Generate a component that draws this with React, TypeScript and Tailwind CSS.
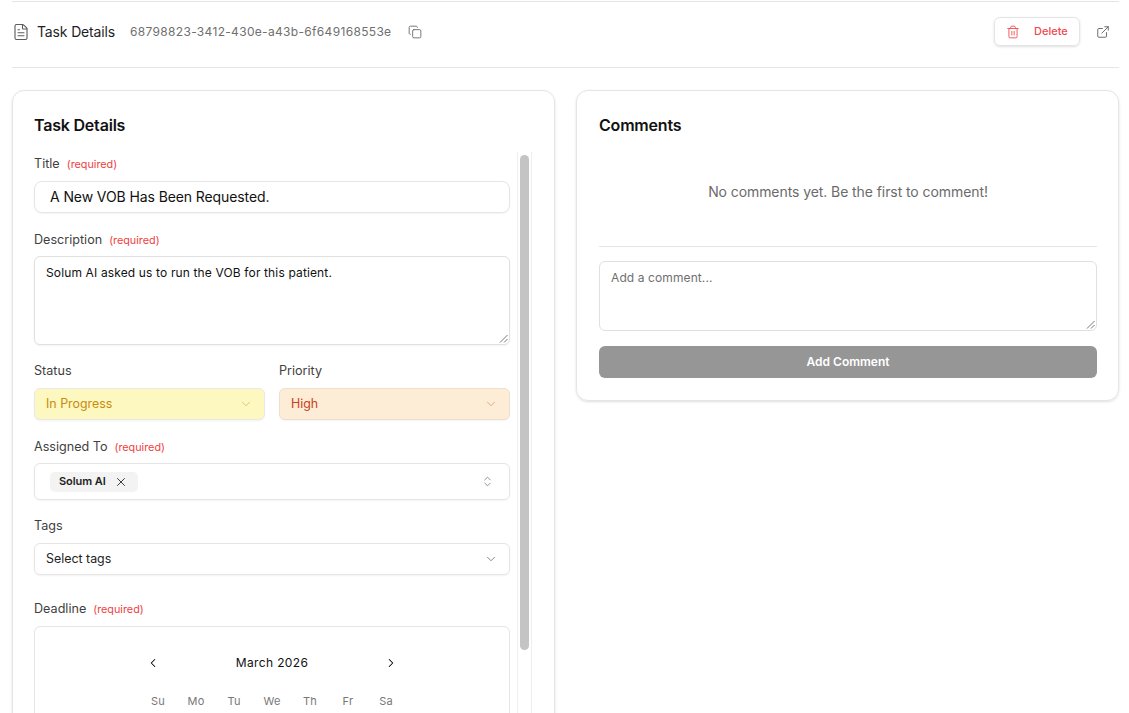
import { ChevronDown, ChevronLeft, ChevronRight, ChevronsUpDown, Copy, ExternalLink, FileText, Trash2, X } from 'lucide-react'

const WEEKDAYS = ['Su', 'Mo', 'Tu', 'We', 'Th', 'Fr', 'Sa']

function Required() {
  return <span className="text-[10.8px] leading-none text-[#f03e3e] ml-[7px] pt-[2px]">(required)</span>
}

function Label({ text, required }: { text: string; required?: boolean }) {
  return (
    <div className="flex items-center h-[18px] text-[12.6px] font-normal text-[#3f3f3f]">
      {text}
      {required && <Required />}
    </div>
  )
}

function Resizer() {
  return (
    <svg className="absolute right-[1px] bottom-[1px]" width="9" height="9" viewBox="0 0 9 9" fill="none" stroke="#555" strokeWidth="0.8">
      <path d="M8.5 1 1 8.5M8.5 5 5 8.5" />
    </svg>
  )
}

export default function App() {
  return (
    <div className="h-[713px] w-[1129px] overflow-hidden bg-white pl-3 pr-[10px] pt-[1px] font-['Inter',sans-serif] text-black">
      {/* Header */}
      <div className="flex h-[67px] items-center justify-between border-y border-[#e5e5e5] pb-[6px]">
        <div className="flex items-center">
          <FileText size={18} strokeWidth={1.5} className="text-[#5c5c5c]" />
          <span className="ml-[7px] text-sm tracking-[-0.15px] text-[#1f1f1f]">Task Details</span>
          <span className="ml-[15px] text-xs tracking-[0.32px] text-[#6f6f6f]">68798823-3412-430e-a43b-6f649168553e</span>
          <Copy size={14} strokeWidth={1.5} className="ml-[17px] text-[#666]" />
        </div>
        <div className="flex items-center pr-[9px]">
          <button className="flex h-[29px] w-[86px] items-center rounded-md border border-[#e5e5e5] pl-[11px] text-[11px] font-medium text-[#f0484e] shadow-sm">
            <Trash2 size={14} strokeWidth={1.5} />
            <span className="ml-[14px]">Delete</span>
          </button>
          <ExternalLink size={14} strokeWidth={1.5} className="ml-[16px] text-[#5c5c5c]" />
        </div>
      </div>

      {/* Cards */}
      <div className="mt-[22px] flex gap-[21px]">
        <div className="h-[700px] w-[543px] shrink-0 rounded-xl border border-[#e5e5e5] pl-[21px] pt-[25px] shadow-sm">
          <h2 className="h-[18px] text-base leading-[18px] font-semibold tracking-[-0.2px] text-[#111]">Task Details</h2>
          <div className="mt-[18px] flex">
            <div className="w-[476px] shrink-0 pt-[3px]">
              <Label text="Title" required />
              <div className="mt-[8px] flex h-[32px] items-center rounded-lg border border-[#e5e5e5] pl-[15px] text-sm tracking-[-0.1px] text-[#111] shadow-xs">
                A New VOB Has Been Requested.
              </div>

              <div className="mt-[18px]">
                <Label text="Description" required />
              </div>
              <div className="relative mt-[7px] h-[89px] rounded-md border border-[#e0e0e0] px-[11px] pt-[8px] text-xs leading-[15px] tracking-[0.14px] text-[#111] shadow-xs">
                Solum AI asked us to run the VOB for this patient.
                <Resizer />
              </div>

              <div className="mt-[17px] grid grid-cols-2 gap-[14px]">
                <div>
                  <Label text="Status" />
                  <div className="mt-[8px] flex h-[32px] items-center justify-between rounded-md border border-[#e9e9e9] bg-[#fcf8bf] pl-[11px] pr-[11px] text-[12.4px] text-[#c98a10] shadow-xs">
                    In Progress
                    <ChevronDown size={14} strokeWidth={1.5} className="text-[#e3b768]" />
                  </div>
                </div>
                <div>
                  <Label text="Priority" />
                  <div className="mt-[8px] flex h-[32px] items-center justify-between rounded-md border border-[#eee0cf] bg-[#fdecd6] pl-[11px] pr-[11px] text-[12.4px] text-[#c9401b] shadow-xs">
                    High
                    <ChevronDown size={14} strokeWidth={1.5} className="text-[#e59a80]" />
                  </div>
                </div>
              </div>

              <div className="mt-[18px]">
                <Label text="Assigned To" required />
              </div>
              <div className="mt-[7px] flex h-[37px] items-center justify-between rounded-md border border-[#e5e5e5] pl-[15px] pr-[15px] shadow-xs">
                <span className="flex h-[20px] w-[88px] items-center rounded-[5px] bg-[#f3f3f3] pl-[9px] text-[11px] font-semibold tracking-[-0.05px] text-[#222]">
                  Solum AI
                  <X size={14} strokeWidth={1.5} className="ml-[8px]" />
                </span>
                <ChevronsUpDown size={13} strokeWidth={1.5} className="text-[#777]" />
              </div>

              <div className="mt-[17px]">
                <Label text="Tags" />
              </div>
              <div className="mt-[8px] flex h-[32px] items-center justify-between rounded-md border border-[#e5e5e5] pl-[11px] pr-[11px] text-[12.4px] text-[#222] shadow-xs">
                Select tags
                <ChevronDown size={14} strokeWidth={1.5} className="text-[#777]" />
              </div>

              <div className="mt-[25px]">
                <Label text="Deadline" required />
              </div>
              <div className="mt-[8px] h-[200px] rounded-md border border-[#e5e5e5] pt-[26px]">
                <div className="mx-auto flex h-[20px] w-[252px] items-center justify-between">
                  <ChevronLeft size={14} strokeWidth={1.75} />
                  <span className="text-xs font-normal tracking-[0.35px] text-[#111]">March 2026</span>
                  <ChevronRight size={14} strokeWidth={1.75} />
                </div>
                <div className="mx-auto mt-[20px] grid w-[266px] grid-cols-7 text-center text-[11px] tracking-[0.02em] text-[#777]">
                  {WEEKDAYS.map((d) => (
                    <span key={d}>{d}</span>
                  ))}
                </div>
              </div>
            </div>

            {/* Scrollbar */}
            <div className="ml-[7px] h-[600px] w-[15px] shrink-0 border-x border-[#eeeeee] px-[2px] pt-[3px]">
              <div className="h-[495px] w-[9px] rounded-full bg-[#c4c4c4]" />
            </div>
          </div>
        </div>

        <div className="h-[311px] w-[543px] shrink-0 rounded-xl border border-[#e5e5e5] pl-[22px] pr-[21px] pt-[25px] shadow-sm">
          <h2 className="h-[18px] text-base leading-[18px] font-semibold tracking-[-0.2px] text-[#111]">Comments</h2>
          <p className="mt-[49px] h-[18px] text-center text-sm leading-[18px] tracking-[-0.08px] text-[#6b6b6b]">No comments yet. Be the first to comment!</p>
          <div className="mt-[45px] border-t border-[#e5e5e5]" />
          <div className="relative mt-[14px] h-[70px] rounded-md border border-[#e0e0e0] px-[11px] pt-[8px] text-xs leading-[15px] tracking-[0.1px] text-[#6f6f6f]">
            Add a comment...
            <Resizer />
          </div>
          <button className="mt-[15px] h-[32px] w-full rounded-md bg-[#969696] text-xs font-semibold tracking-[0.02px] text-white">Add Comment</button>
        </div>
      </div>
    </div>
  )
}
